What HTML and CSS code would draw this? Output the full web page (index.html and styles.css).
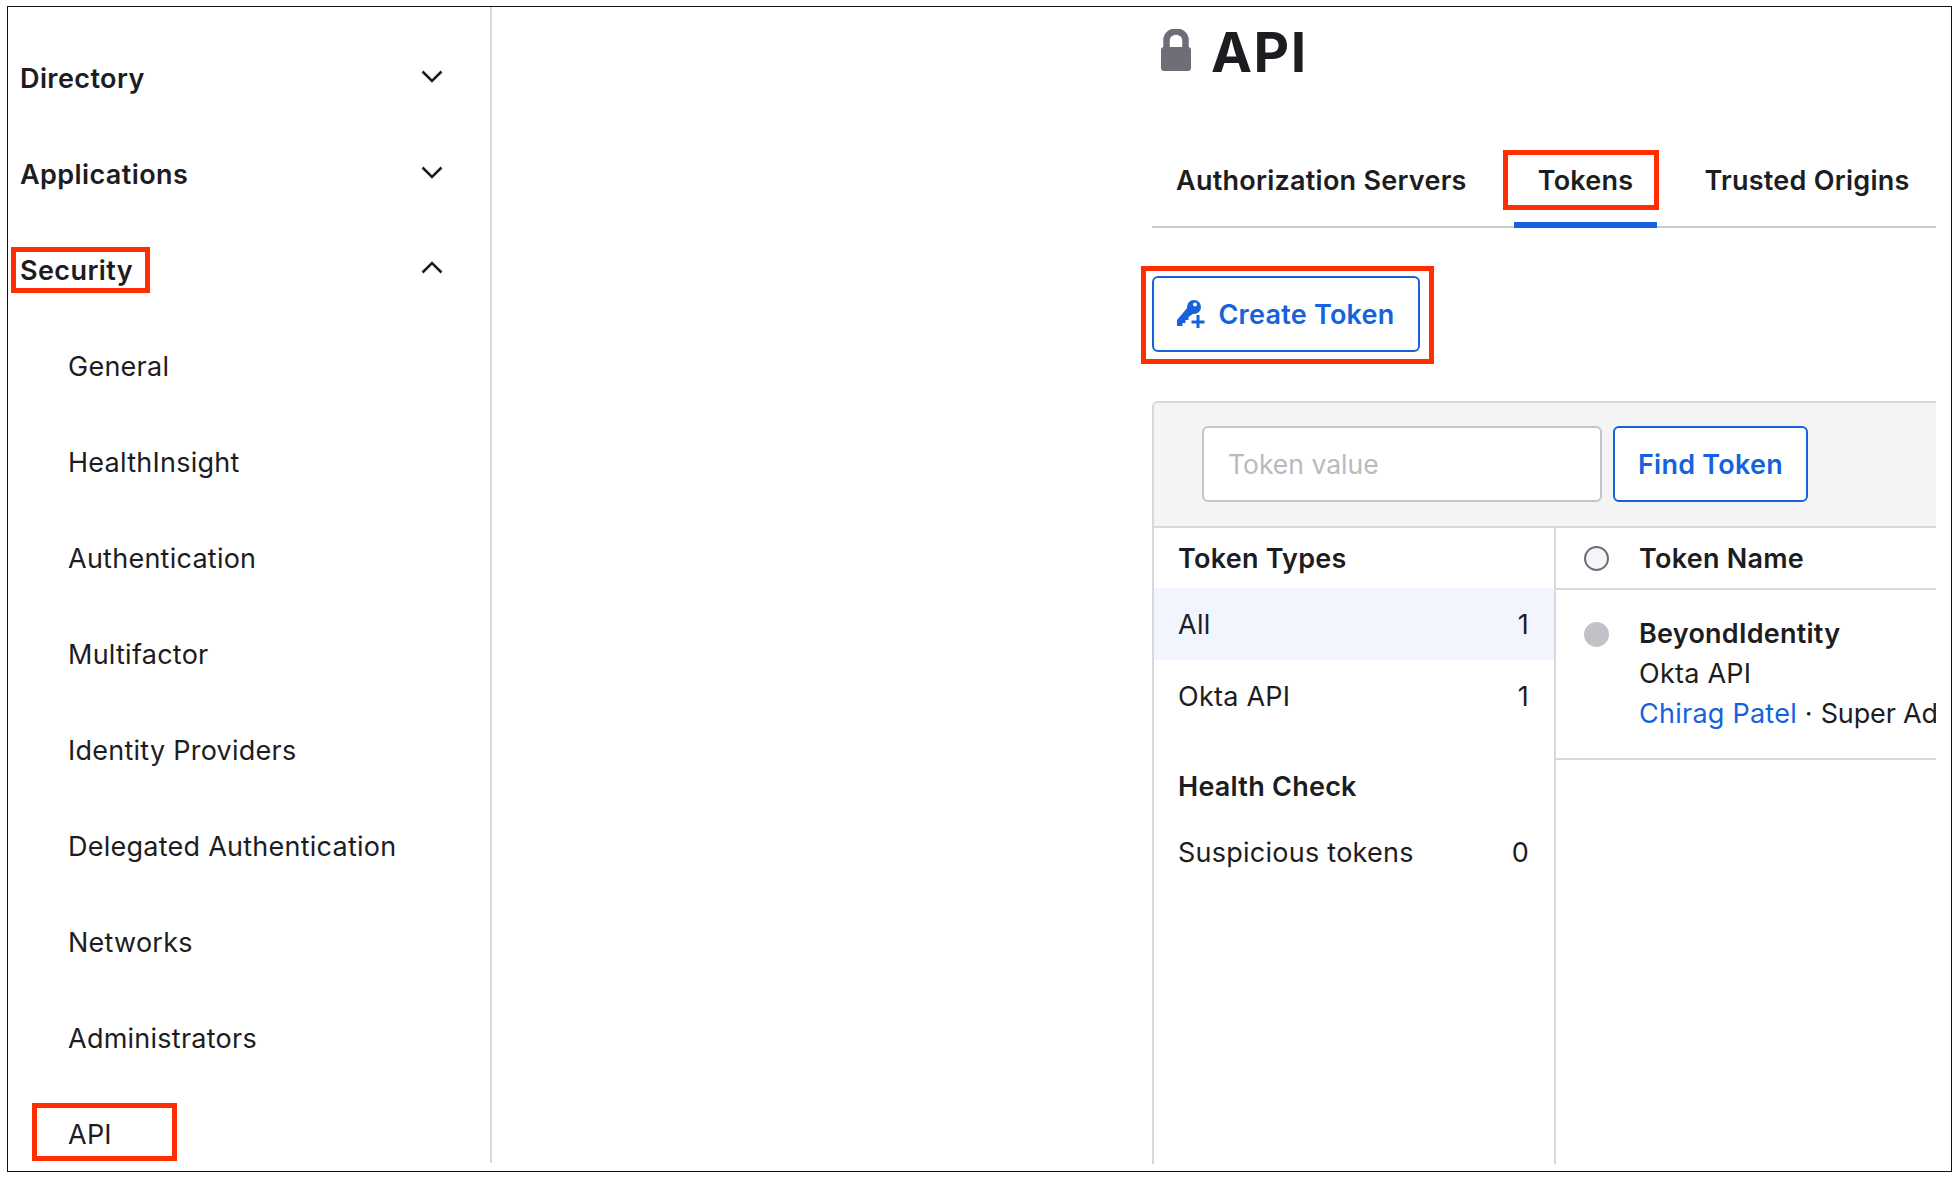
FILE: index.html
```html
<!DOCTYPE html>
<html lang="en">
<head>
<meta charset="utf-8">
<title>Okta API Tokens</title>
<link rel="stylesheet" href="styles.css">
</head>
<body>
<div class="frame">
  <aside class="sidebar">
    <div class="nav-head"><span>Directory</span><svg class="chev" viewBox="0 0 22 13"><path d="M1.5 1.5 11 11l9.5-9.500"/></svg></div>
    <div class="nav-head"><span>Applications</span><svg class="chev" viewBox="0 0 22 13"><path d="M1.5 1.5 11 11l9.5-9.500"/></svg></div>
    <div class="nav-head"><span>Security</span><svg class="chev chev-up" viewBox="0 0 22 13"><path d="M1.5 11.500 11 2l9.500 9.500"/></svg><i class="mark mark-security"></i></div>
    <div class="nav-item">General</div>
    <div class="nav-item">HealthInsight</div>
    <div class="nav-item">Authentication</div>
    <div class="nav-item">Multifactor</div>
    <div class="nav-item">Identity Providers</div>
    <div class="nav-item">Delegated Authentication</div>
    <div class="nav-item">Networks</div>
    <div class="nav-item">Administrators</div>
    <div class="nav-item">API<i class="mark mark-api"></i></div>
  </aside>
  <main class="main">
    <div class="content">
      <h1 class="title">
        <svg class="lock" viewBox="0 0 30 42"><path class="lock-arc" d="M5.5 19v-8a9.500 8.500 0 0 1 19 0v8"/><rect class="lock-body" x="0" y="18" width="30" height="24" rx="3"/></svg>
        <span>API</span>
      </h1>
      <nav class="tabs">
        <div class="tab">Authorization Servers</div>
        <div class="tab tab-active">Tokens<i class="mark mark-tab"></i></div>
        <div class="tab">Trusted Origins</div>
      </nav>
      <div class="create-wrap">
        <button class="btn btn-create">
          <svg class="key" viewBox="0 0 28 28"><path class="key-fill" fill-rule="evenodd" d="M10 7a7 7 0 1 1 14 0a7 7 0 1 1-14 0Zm6-2.500a2 2 0 1 0 4 0 2 2 0 0 0-4 0Z"/><path class="key-fill" d="M11 7 16.500 13.500 11.500 17V20H8.500V23H5.500V26H0V20Z"/><path class="key-plus" d="M21 15v13M14.500 22h13"/></svg>
          <span>Create Token</span>
        </button>
        <i class="mark mark-create"></i>
      </div>
      <section class="panel">
        <div class="search">
          <input class="search-input" type="text" placeholder="Token value">
          <button class="btn btn-find">Find Token</button>
        </div>
        <div class="panel-body">
          <div class="types">
            <div class="types-head">Token Types</div>
            <div class="type-row type-row-active"><span>All</span><span>1</span></div>
            <div class="type-row"><span>Okta API</span><span>1</span></div>
            <div class="types-head types-head-gap">Health Check</div>
            <div class="type-row"><span>Suspicious tokens</span><span>0</span></div>
          </div>
          <div class="list">
            <div class="list-head"><span class="radio"></span><span>Token Name</span></div>
            <div class="list-row">
              <span class="dot"></span>
              <div class="token">
                <div class="token-name">BeyondIdentity</div>
                <div>Okta API</div>
                <div><a class="link">Chirag Patel</a> · <span class="role">Super Admin</span></div>
              </div>
            </div>
          </div>
        </div>
      </section>
    </div>
  </main>
</div>
</body>
</html>
```

FILE: styles.css
```css
* { box-sizing: border-box; }
html, body { margin: 0; padding: 0; background: #fff; }
body {
  font-family: Inter, "Liberation Sans", sans-serif;
  font-size: 27px;
  letter-spacing: 0.25px;
  color: #1d1d21;
  height: 1181px;
  overflow: hidden;
}
.frame {
  margin: 6px 0 0 7px;
  width: 1945px;
  height: 1166px;
  border: 1px solid #111;
  display: flex;
  align-items: flex-start;
  overflow: hidden;
}
.sidebar {
  flex: 0 0 484px;
  height: 1156px;
  padding-top: 23px;
  border-right: 2px solid #d7d7dc;
}
.nav-head, .nav-item {
  position: relative;
  height: 96px;
  display: flex;
  align-items: center;
}
.nav-head { padding: 0 47px 0 12px; justify-content: space-between; font-weight: 600; letter-spacing: 0.4px; }
.nav-item { padding-left: 60px; }
.chev { width: 22px; height: 13px; margin-top: -3px; }
.chev-up { margin-top: -5px; }
.chev path { fill: none; stroke: #1d1d21; stroke-width: 2.6; }
.mark { position: absolute; border: 5px solid #ff2d00; display: block; pointer-events: none; }
.mark-security { left: 3px; top: 25px; width: 139px; height: 46px; }
.mark-api { left: 24px; top: 17px; width: 145px; height: 58px; }
.mark-tab { left: -11px; top: -1px; width: 156px; height: 60px; }
.mark-create { left: -11px; top: -10px; width: 293px; height: 98px; }
.main { flex: 1; height: 1156px; padding-left: 660px; }
.content { width: 784px; height: 100%; }
.title {
  margin: 0;
  height: 90px;
  padding-left: 9px;
  display: flex;
  align-items: center;
  gap: 20px;
  font-size: 55px;
  font-weight: 700;
  letter-spacing: 1.5px;
  line-height: 1;
}
.lock { width: 30px; height: 42px; margin-top: -4px; }
.lock-arc { fill: none; stroke: #6e6e78; stroke-width: 6.5; }
.lock-body { fill: #6e6e78; }
.tabs {
  height: 131px;
  display: flex;
  align-items: flex-end;
  gap: 23px;
  border-bottom: 2px solid #c9c9d0;
}
.tab {
  position: relative;
  height: 77px;
  margin-bottom: -2px;
  padding: 15px 24px 0;
  line-height: 30px;
  font-weight: 600;
  border-bottom: 6px solid transparent;
}
.tab-active { border-bottom-color: #1662dd; }
.create-wrap { position: relative; width: 268px; height: 76px; margin: 48px 0 49px; }
.btn {
  height: 76px;
  background: #fff;
  border: 2px solid #1662dd;
  border-radius: 6px;
  color: #1662dd;
  font: 600 27px Inter, "Liberation Sans", sans-serif;
  letter-spacing: 0.25px;
  display: flex;
  align-items: center;
  justify-content: center;
  padding: 0;
}
.btn-create { width: 268px; gap: 13px; }
.btn-find { width: 195px; }
.key { width: 28px; height: 28px; }
.key-fill { fill: #1662dd; }
.key-plus { fill: none; stroke: #1662dd; stroke-width: 3; }
.panel {
  width: 784px;
  height: 763px;
  overflow: hidden;
  border-top: 2px solid #d7d7dc;
  border-left: 2px solid #d7d7dc;
  border-top-left-radius: 6px;
  display: flex;
  flex-direction: column;
}
.search {
  height: 125px;
  padding: 23px 0 0 48px;
  display: flex;
  gap: 11px;
  background: #f4f4f4;
  border-bottom: 2px solid #d7d7dc;
  flex: none;
}
.search-input {
  width: 400px;
  height: 76px;
  padding: 0 24px;
  border: 2px solid #c4c4ca;
  border-radius: 6px;
  background: #fff;
  font: 400 26.5px Inter, "Liberation Sans", sans-serif;
}
.search-input::placeholder { color: #b9b9c0; opacity: 1; }
.panel-body { flex: 1; display: flex; min-width: 0; }
.types { flex: 0 0 402px; border-right: 2px solid #d7d7dc; }
.types-head {
  height: 60px;
  padding: 0 24px;
  display: flex;
  align-items: center;
  font-weight: 600;
}
.types-head-gap { margin-top: 24px; }
.type-row {
  height: 72px;
  padding: 0 25px 0 24px;
  display: flex;
  align-items: center;
  justify-content: space-between;
}
.type-row-active { background: #f2f4fe; }
.list { flex: 1; min-width: 0; }
.list-head {
  height: 62px;
  padding-left: 28px;
  display: flex;
  align-items: center;
  gap: 30px;
  font-weight: 600;
  border-bottom: 2px solid #d7d7dc;
}
.radio {
  width: 25px;
  height: 25px;
  border: 2px solid #6e6e78;
  border-radius: 50%;
  background: #f6f6f8;
}
.list-row {
  height: 170px;
  padding: 24px 0 0 28px;
  display: flex;
  gap: 30px;
  line-height: 40px;
  border-bottom: 2px solid #d7d7dc;
}
.dot {
  width: 25px;
  height: 25px;
  margin-top: 8px;
  border-radius: 50%;
  background: #c1c1c8;
  flex: none;
}
.token { white-space: nowrap; }
.token-name { font-weight: 600; }
.link { color: #1662dd; }
.role { letter-spacing: -0.15px; }
```
